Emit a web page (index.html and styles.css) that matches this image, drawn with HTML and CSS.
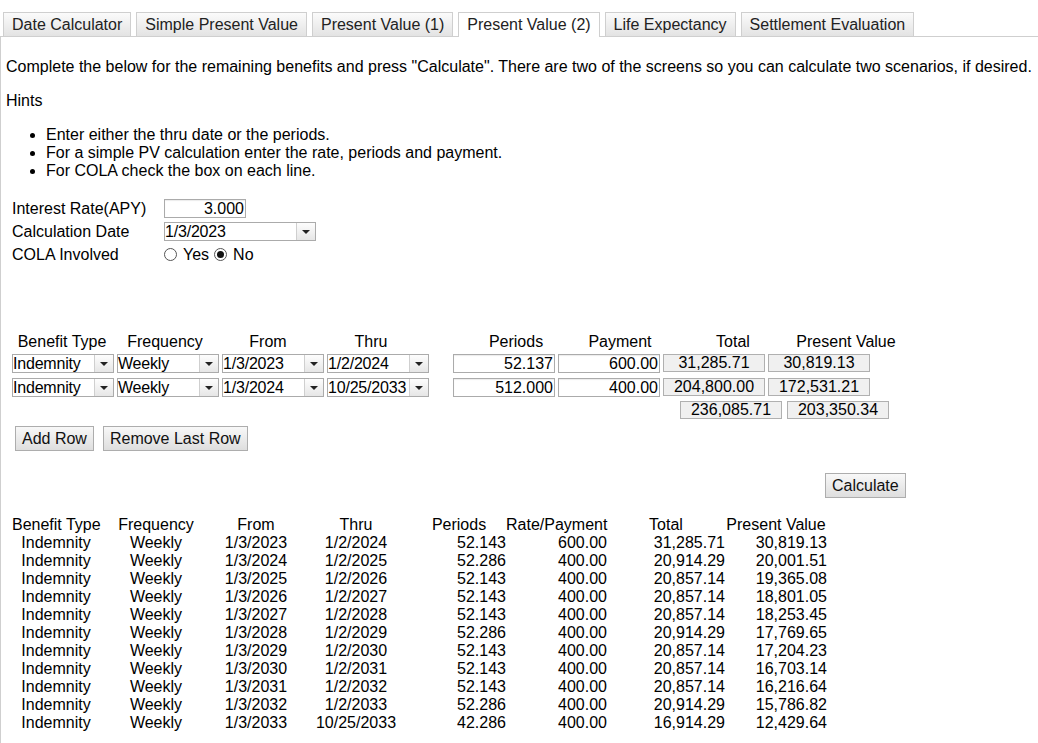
FILE: index.html
```html
<!DOCTYPE html>
<html lang="en">
<head>
  <meta charset="UTF-8">
  <title>Present Value (2)</title>
  <link rel="stylesheet" href="styles.css">
</head>
<body>
  <div class="tabs">
    <div class="tab">Date Calculator</div>
    <div class="tab">Simple Present Value</div>
    <div class="tab">Present Value (1)</div>
    <div class="tab tab-active">Present Value (2)</div>
    <div class="tab">Life Expectancy</div>
    <div class="tab">Settlement Evaluation</div>
  </div>

  <div class="panel">
    <p>Complete the below for the remaining benefits and press "Calculate". There are two of the screens so you can calculate two scenarios, if desired.</p>
    <p>Hints</p>
    <ul>
      <li>Enter either the thru date or the periods.</li>
      <li>For a simple PV calculation enter the rate, periods and payment.</li>
      <li>For COLA check the box on each line.</li>
    </ul>

    <div class="settings">
      <div class="setting-row">
        <div class="setting-label">Interest Rate(APY)</div>
        <div class="field field-rate">3.000</div>
      </div>
      <div class="setting-row">
        <div class="setting-label">Calculation Date</div>
        <div class="select select-date"><span class="select-text">1/3/2023</span><span class="select-arrow"><i></i></span></div>
      </div>
      <div class="setting-row">
        <div class="setting-label">COLA Involved</div>
        <div class="radios">
          <span class="radio"></span><span class="radio-label">Yes</span>
          <span class="radio radio-on"></span><span class="radio-label">No</span>
        </div>
      </div>
    </div>

    <div class="entry-head">
      <div class="head-cell">Benefit Type</div>
      <div class="head-cell">Frequency</div>
      <div class="head-cell">From</div>
      <div class="head-cell">Thru</div>
      <div class="head-cell head-periods">Periods</div>
      <div class="head-cell head-payment">Payment</div>
      <div class="head-cell head-total">Total</div>
      <div class="head-cell head-pv">Present Value</div>
    </div>

    <div class="entry-row">
      <div class="select"><span class="select-text">Indemnity</span><span class="select-arrow"><i></i></span></div>
      <div class="select"><span class="select-text">Weekly</span><span class="select-arrow"><i></i></span></div>
      <div class="select"><span class="select-text">1/3/2023</span><span class="select-arrow"><i></i></span></div>
      <div class="select"><span class="select-text">1/2/2024</span><span class="select-arrow"><i></i></span></div>
      <div class="field field-periods">52.137</div>
      <div class="field">600.00</div>
      <div class="readout">31,285.71</div>
      <div class="readout">30,819.13</div>
    </div>
    <div class="entry-row">
      <div class="select"><span class="select-text">Indemnity</span><span class="select-arrow"><i></i></span></div>
      <div class="select"><span class="select-text">Weekly</span><span class="select-arrow"><i></i></span></div>
      <div class="select"><span class="select-text">1/3/2024</span><span class="select-arrow"><i></i></span></div>
      <div class="select"><span class="select-text">10/25/2033</span><span class="select-arrow"><i></i></span></div>
      <div class="field field-periods">512.000</div>
      <div class="field">400.00</div>
      <div class="readout">204,800.00</div>
      <div class="readout">172,531.21</div>
    </div>
    <div class="totals-row">
      <div class="readout">236,085.71</div>
      <div class="readout">203,350.34</div>
    </div>

    <div class="row-buttons">
      <button class="btn">Add Row</button>
      <button class="btn">Remove Last Row</button>
    </div>
    <div class="calc-line">
      <button class="btn">Calculate</button>
    </div>

    <div class="results" id="results">
      <div class="res-head">Benefit Type</div>
      <div class="res-head">Frequency</div>
      <div class="res-head">From</div>
      <div class="res-head">Thru</div>
      <div class="res-head">Periods</div>
      <div class="res-head">Rate/Payment</div>
      <div class="res-head">Total</div>
      <div class="res-head">Present Value</div>
    </div>
  </div>

  <script>
    var rows = [
      ['1/3/2023', '1/2/2024', '52.143', '600.00', '31,285.71', '30,819.13'],
      ['1/3/2024', '1/2/2025', '52.286', '400.00', '20,914.29', '20,001.51'],
      ['1/3/2025', '1/2/2026', '52.143', '400.00', '20,857.14', '19,365.08'],
      ['1/3/2026', '1/2/2027', '52.143', '400.00', '20,857.14', '18,801.05'],
      ['1/3/2027', '1/2/2028', '52.143', '400.00', '20,857.14', '18,253.45'],
      ['1/3/2028', '1/2/2029', '52.286', '400.00', '20,914.29', '17,769.65'],
      ['1/3/2029', '1/2/2030', '52.143', '400.00', '20,857.14', '17,204.23'],
      ['1/3/2030', '1/2/2031', '52.143', '400.00', '20,857.14', '16,703.14'],
      ['1/3/2031', '1/2/2032', '52.143', '400.00', '20,857.14', '16,216.64'],
      ['1/3/2032', '1/2/2033', '52.286', '400.00', '20,914.29', '15,786.82'],
      ['1/3/2033', '10/25/2033', '42.286', '400.00', '16,914.29', '12,429.64']
    ];
    var results = document.getElementById('results');
    rows.forEach(function (r) {
      var cells = ['Indemnity', 'Weekly'].concat(r);
      cells.forEach(function (text, i) {
        var cell = document.createElement('div');
        cell.className = i < 4 ? 'res-cell' : 'res-cell res-num';
        cell.textContent = text;
        results.appendChild(cell);
      });
    });
  </script>
</body>
</html>
```

FILE: styles.css
```css
body {
  margin: 0;
  font-family: "Liberation Sans", Arial, sans-serif;
  font-size: 16px;
  color: #000;
  background-color: #fff;
}
.tabs {
  display: flex;
  gap: 5px;
  padding: 12px 0 0 3px;
  border-bottom: 1px solid #cfcfcf;
}
.tab {
  height: 23px;
  line-height: 23px;
  padding: 0 8px;
  border: 1px solid #cfcfcf;
  border-bottom: none;
  background: linear-gradient(#fbfbfb, #e3e3e3);
  color: #222;
}
.tab-active {
  background: #fff;
  margin-bottom: -1px;
  height: 24px;
}
.panel {
  border-left: 1px solid #cfcfcf;
  padding: 5px 5px 0 5px;
  min-height: calc(100vh - 42px);
}
p {
  margin: 16px 0;
}
ul {
  margin: 16px 0;
  padding-left: 40px;
}
.settings {
  padding: 1px 0 0 6px;
}
.setting-row {
  display: flex;
  align-items: center;
  height: 23px;
}
.setting-label {
  width: 152px;
}
.field {
  box-sizing: border-box;
  width: 102px;
  height: 19px;
  line-height: 17px;
  border: 1px solid #ababab;
  background: #fff;
  text-align: right;
  padding-right: 1px;
  box-shadow: inset 0 1px 1px rgba(0, 0, 0, 0.08);
}
.field-rate {
  width: 82px;
}
.select {
  box-sizing: border-box;
  display: flex;
  width: 102px;
  height: 19px;
  border: 1px solid #ababab;
  background: #fff;
}
.select-date {
  width: 152px;
}
.select-text {
  flex: 1;
  min-width: 0;
  line-height: 17px;
  white-space: nowrap;
  letter-spacing: -0.2px;
}
.select-arrow {
  flex-shrink: 0;
  width: 18px;
  border-left: 1px solid #cfcfcf;
  background: linear-gradient(#fdfdfd, #e6e6e6);
  display: flex;
  align-items: center;
  justify-content: center;
}
.select-arrow i {
  width: 0;
  height: 0;
  border-left: 4px solid transparent;
  border-right: 4px solid transparent;
  border-top: 4px solid #222;
}
.radios {
  display: flex;
  align-items: center;
}
.radio {
  box-sizing: border-box;
  width: 13px;
  height: 13px;
  border: 1px solid #555;
  border-radius: 50%;
  background: #fff;
  display: flex;
  align-items: center;
  justify-content: center;
}
.radio-on::after {
  content: "";
  width: 7px;
  height: 7px;
  border-radius: 50%;
  background: #111;
}
.radio-label {
  margin: 0 5px 0 6px;
}
.entry-head {
  display: flex;
  gap: 3px;
  margin: 67px 0 0 6px;
  line-height: 18px;
}
.head-cell {
  width: 100px;
  text-align: center;
}
.head-periods {
  margin-left: 42px;
}
.head-payment {
  margin-left: 1px;
}
.head-total,
.head-pv {
  margin-left: 10px;
}
.entry-row {
  display: flex;
  gap: 3px;
  margin: 3px 0 0 6px;
}
.entry-row + .entry-row {
  margin-top: 5px;
}
.field-periods {
  margin-left: 21px;
}
.readout {
  box-sizing: border-box;
  width: 102px;
  height: 18px;
  line-height: 16px;
  border: 1px solid #b0b0b0;
  background: #f0f0f0;
  text-align: center;
}
.totals-row {
  display: flex;
  gap: 5px;
  margin: 4px 0 0 674px;
}
.btn {
  font-family: "Liberation Sans", Arial, sans-serif;
  font-size: 16px;
  color: #111;
  height: 25px;
  padding: 0 6px;
  border: 1px solid #adadad;
  background: linear-gradient(#f8f8f8, #dedede);
  cursor: pointer;
}
.row-buttons {
  display: flex;
  gap: 9px;
  margin: 7px 0 0 9px;
}
.calc-line {
  display: flex;
  margin: 22px 0 0 819px;
}
.results {
  display: grid;
  grid-template-columns: 88px 112px 88px 112px 94px 101px 118px 102px;
  line-height: 18px;
  margin: 18px 0 0 6px;
  padding-bottom: 10px;
}
.res-head,
.res-cell {
  text-align: center;
  white-space: nowrap;
}
.res-num {
  text-align: right;
}
```
